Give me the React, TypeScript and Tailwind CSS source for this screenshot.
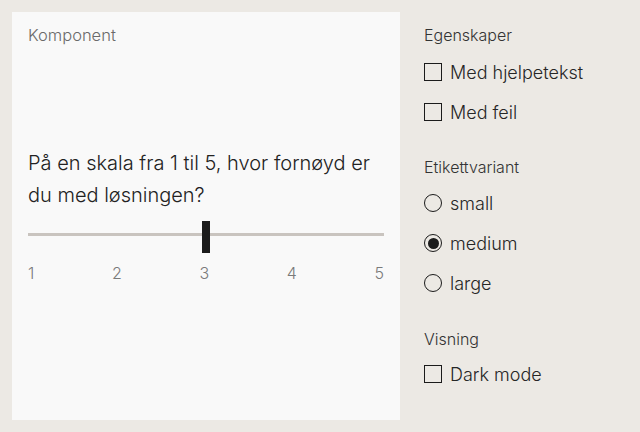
import React, { useState } from 'react';

function Checkbox({ label, checked = false }: { label: string; checked?: boolean }) {
  return (
    <label className="flex items-center gap-2 h-10 text-[18px] text-[#262626]">
      <span className={`w-[18px] h-[18px] border-[1.5px] border-[#1b1b1b] ${checked ? 'bg-[#1b1b1b]' : ''}`} />
      {label}
    </label>
  );
}

function Radio({ label, checked = false }: { label: string; checked?: boolean }) {
  return (
    <label className="flex items-center gap-2 h-10 text-[18px] text-[#262626]">
      <span className="w-[18px] h-[18px] rounded-full border-[1.5px] border-[#1b1b1b] flex items-center justify-center">
        {checked && <span className="w-[11px] h-[11px] rounded-full bg-[#1b1b1b]" />}
      </span>
      {label}
    </label>
  );
}

export default function App() {
  const [value] = useState(3);
  const steps = [1, 2, 3, 4, 5];

  return (
    <div className="w-[640px] h-[432px] bg-[#ece9e4] p-3 flex gap-6 font-light" style={{ fontFamily: 'Inter, sans-serif' }}>
      {/* Preview */}
      <div className="w-[388px] h-[408px] bg-[#f9f9f9] px-4 pt-3">
        <div className="text-[16.5px] text-[#6a6a6a] leading-[22px]">Komponent</div>
        <div className="mt-[101px] text-[20px] leading-[32px] text-[#222]">
          På en skala fra 1 til 5, hvor fornøyd er du med løsningen?
        </div>
        <div className="relative mt-[10px] h-[32px] pt-[12px]">
          <div className="w-full h-[3px] bg-[#c9c4bf]" />
          <div
            className="absolute top-0 w-2 h-8 bg-[#1b1b1b]"
            style={{ left: `calc(${((value - 1) / 4) * 100}% - 4px)` }}
          />
        </div>
        <div className="mt-[8px] flex justify-between text-[16px] text-[#7a7a7a]">
          {steps.map(s => <span key={s}>{s}</span>)}
        </div>
      </div>

      {/* Controls */}
      <div className="pt-3 flex flex-col">
        <div className="text-[16px] leading-[22px] text-[#333]">Egenskaper</div>
        <div className="mt-[6px]">
          <Checkbox label="Med hjelpetekst" />
          <Checkbox label="Med feil" />
        </div>
        <div className="mt-[24px] text-[16px] leading-[22px] text-[#333]">Etikettvariant</div>
        <div className="mt-[5px]">
          <Radio label="small" />
          <Radio label="medium" checked />
          <Radio label="large" />
        </div>
        <div className="mt-[25px] text-[16px] leading-[22px] text-[#333]">Visning</div>
        <div className="mt-[4px]">
          <Checkbox label="Dark mode" />
        </div>
      </div>
    </div>
  );
}
